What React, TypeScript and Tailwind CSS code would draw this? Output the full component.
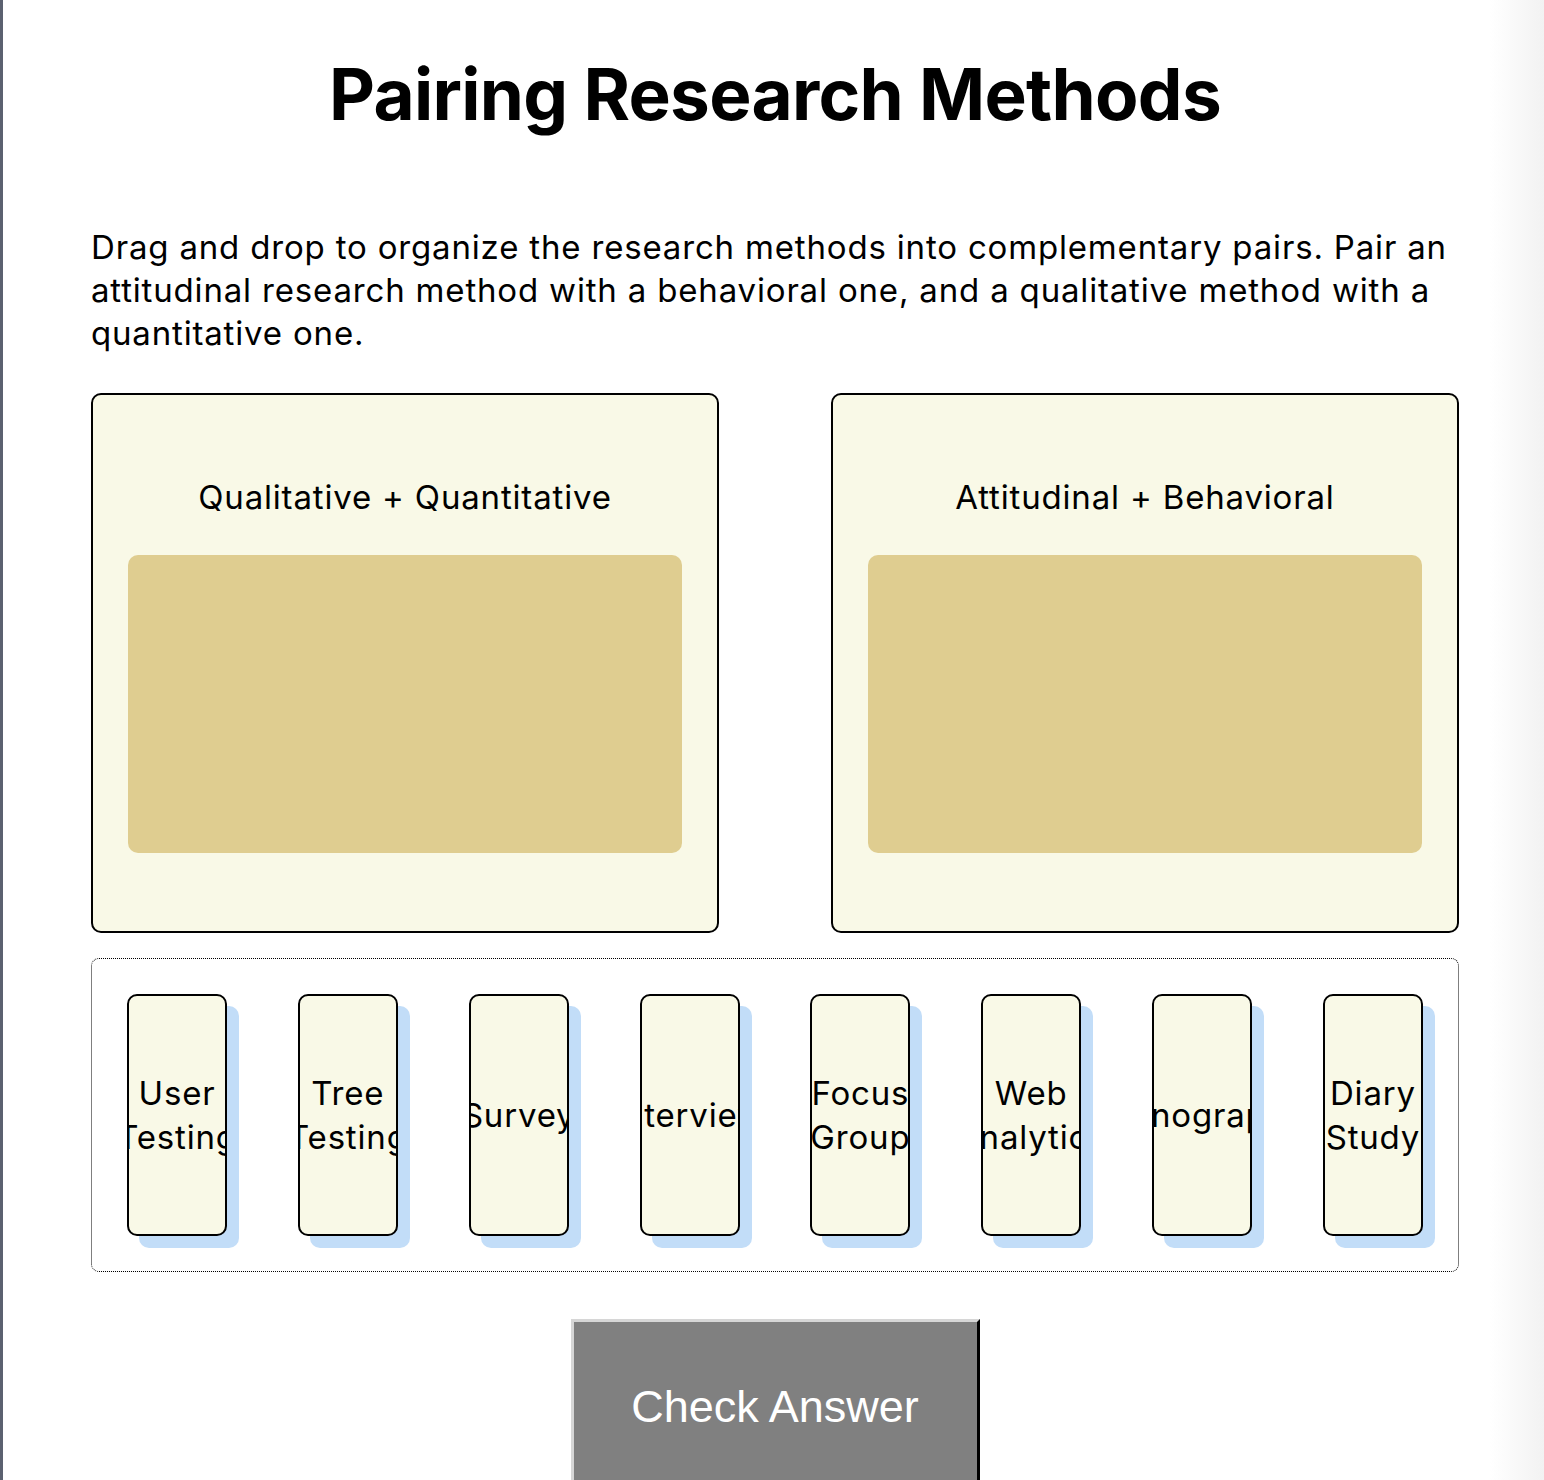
const METHODS = [
  "User Testing",
  "Tree Testing",
  "Survey",
  "Interview",
  "Focus Group",
  "Web Analytics",
  "Ethnography",
  "Diary Study",
];

const PAIRS = ["Qualitative + Quantitative", "Attitudinal + Behavioral"];

function DropBox({ title }: { title: string }) {
  return (
    <div className="h-[540px] w-[628px] rounded-[10px] border-2 border-black bg-[#f9f9e7] px-[35px] pt-[84px] pb-[78px]">
      <h2 className="mb-[40px] h-[36px] text-center text-[33px] leading-[36px] font-normal tracking-[0.025em]">
        {title}
      </h2>
      <div className="h-[298px] rounded-[10px] bg-[#dfcd90]" />
    </div>
  );
}

function MethodCard({ label }: { label: string }) {
  return (
    <div className="relative h-[242px] w-[100px]">
      <div className="absolute left-[12px] top-[12px] h-[242px] w-[100px] rounded-[10px] bg-[#c2ddf8]" />
      <div className="relative flex h-[242px] w-[100px] items-center justify-center overflow-hidden rounded-[10px] border-2 border-black bg-[#f9f9e7]">
        <span className="text-center text-[33px] leading-[44px] tracking-[0.025em]">
          {label}
        </span>
      </div>
    </div>
  );
}

export default function App() {
  return (
    <div className="flex min-h-screen border-l-[3px] border-[#5b6170] bg-white font-['Inter','Noto_Sans',sans-serif] text-black">
      <main className="flex-1 pl-[88px]">
        <div className="w-[1368px] pb-[40px]">
          <h1 className="mt-[51px] text-center text-[71px] leading-[87px] font-bold tracking-[-0.01em]">
            Pairing Research Methods
          </h1>
          <p className="mt-[88px] text-[33px] leading-[43px] tracking-[0.025em]">
            Drag and drop to organize the research methods into complementary
            pairs. Pair an attitudinal research method with a behavioral one,
            and a qualitative method with a quantitative one.
          </p>

          <div className="mt-[38px] flex justify-between">
            {PAIRS.map((p) => (
              <DropBox key={p} title={p} />
            ))}
          </div>

          <div className="mt-[25px] flex h-[314px] justify-between rounded-[8px] border border-dotted border-black px-[35px] py-[35px]">
            {METHODS.map((m) => (
              <MethodCard key={m} label={m} />
            ))}
          </div>

          <div className="mt-[47px] flex justify-center">
            <button className="w-[409px] border-[3px] border-t-[#d6d6d6] border-l-[#d6d6d6] border-r-[#333333] border-b-[#333333] bg-[#808080] py-[60px] font-['Liberation_Sans',Arial,sans-serif] text-[45px] leading-[50px] text-white [border-style:outset]">
              Check Answer
            </button>
          </div>
        </div>
      </main>
      <div className="w-[54px] shrink-0 bg-gradient-to-r from-white to-[#f2f2f2]" />
    </div>
  );
}
